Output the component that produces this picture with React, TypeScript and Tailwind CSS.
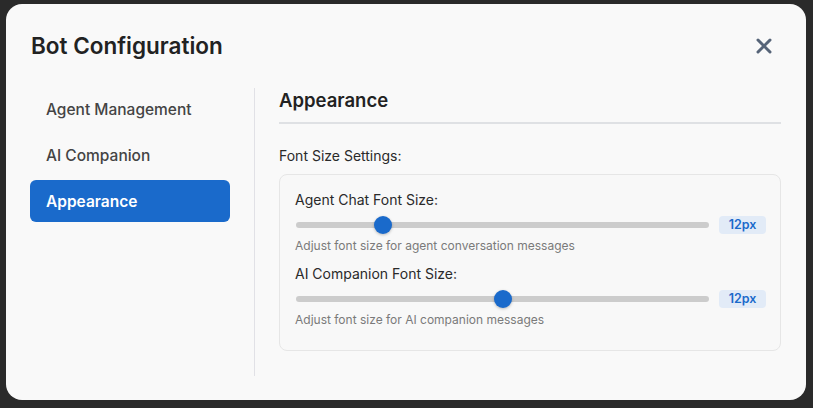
import { X } from 'lucide-react';

const navItems = ['Agent Management', 'AI Companion', 'Appearance'];

interface SliderRowProps {
    label: string;
    hint: string;
    percent: number;
    value: string;
}

function SliderRow({ label, hint, percent, value }: SliderRowProps) {
    return (
        <div className="flex flex-col">
            <span className="text-[14px] leading-[20px] text-[#2a2a2a]">{label}</span>
            <div className="flex items-center gap-[10px] mt-[6px]">
                <div className="relative flex-1 h-[18px] flex items-center ml-[1px]">
                    <div className="w-full h-[6px] rounded-full bg-[#cccccc]" />
                    <div
                        className="absolute top-0 w-[18px] h-[18px] rounded-full bg-[#1a6acb] shadow-[0_1px_3px_rgba(0,0,0,0.25)]"
                        style={{ left: `calc(${percent}% - ${percent * 0.18}px)` }}
                    />
                </div>
                <span className="w-[47px] text-center h-[18px] leading-[18px] rounded-[4px] bg-[#e2ebf7] text-[#1a6acb] text-[12.5px] font-semibold">
                    {value}
                </span>
            </div>
            <span className="mt-[4px] text-[12px] leading-[16px] text-[#7a7a7a]">{hint}</span>
        </div>
    );
}

export default function App() {
    return (
        <div className="w-[813px] h-[408px] bg-[#2a2a2a] pl-[6px] pt-[4px] font-['Inter',sans-serif]">
            <div className="w-[800px] h-[396px] rounded-[16px] bg-[#f9f9f9] px-[24px] pt-[26px] flex flex-col">
                <div className="flex items-center justify-between pr-[6px]">
                    <h2 className="text-[22.5px] leading-[32px] font-semibold text-[#222222] pl-[1px]">Bot Configuration</h2>
                    <X size={24} strokeWidth={3} className="text-[#566478]" />
                </div>

                <div className="flex mt-[26px] flex-1 pb-[24px]">
                    <nav className="w-[200px] flex flex-col gap-[4px] pt-[1px]">
                        {navItems.map(item => (
                            <div
                                key={item}
                                className={
                                    item === 'Appearance'
                                        ? 'h-[42px] -mt-[1px] flex items-center px-[16px] rounded-[6px] bg-[#1a6acb] text-white text-[15.5px] font-semibold'
                                        : 'h-[42px] flex items-center px-[16px] rounded-[6px] text-[#444444] text-[15.5px] font-medium'
                                }
                            >
                                <span className={item === 'Appearance' ? 'pt-[1px]' : ''}>{item}</span>
                            </div>
                        ))}
                    </nav>

                    <div className="ml-[24px] w-px bg-[#e1e1e6]" />

                    <div className="flex-1 pl-[24px] pr-[1px]">
                        <h3 className="text-[18.5px] leading-[24px] font-semibold text-[#222222] pb-[10px] border-b-2 border-[#dfe1e4]">
                            Appearance
                        </h3>
                        <p className="mt-[23px] text-[14px] leading-[18px] text-[#2a2a2a]">Font Size Settings:</p>
                        <div className="mt-[9px] border border-[#e6e6e6] rounded-[8px] bg-[#f8f8f8] pl-[15px] pr-[14px] pt-[15px] pb-[22px] flex flex-col gap-[10px]">
                            <SliderRow
                                label="Agent Chat Font Size:"
                                hint="Adjust font size for agent conversation messages"
                                percent={19.8}
                                value="12px"
                            />
                            <SliderRow
                                label="AI Companion Font Size:"
                                hint="Adjust font size for AI companion messages"
                                percent={50}
                                value="12px"
                            />
                        </div>
                    </div>
                </div>
            </div>
        </div>
    );
}
